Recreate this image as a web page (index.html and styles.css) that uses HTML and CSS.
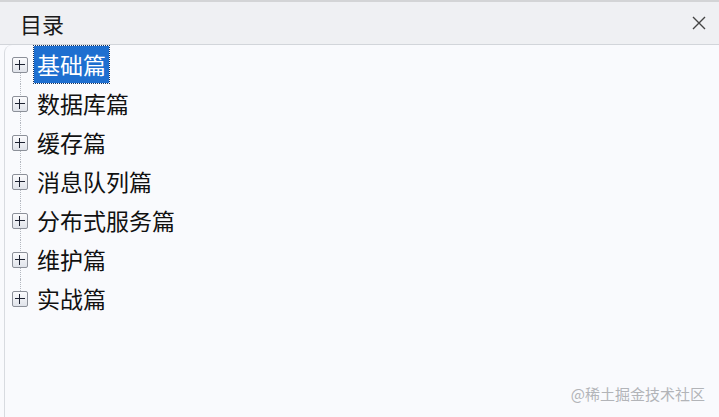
FILE: index.html
```html
<!DOCTYPE html>
<html lang="zh-CN">
<head>
    <meta charset="UTF-8">
    <meta name="viewport" content="width=device-width, initial-scale=1.0">
    <title>目录</title>
    <link rel="stylesheet" href="styles.css">
</head>
<body>
    <div class="panel">
        <div class="panel-header">
            <span class="panel-title">目录</span>
            <span class="close-btn">
                <svg width="14" height="14" viewBox="0 0 14 14">
                    <path d="M1 1 L13 13 M13 1 L1 13" stroke="#444" stroke-width="1.4" fill="none"/>
                </svg>
            </span>
        </div>
        <div class="panel-body">
            <ul class="tree">
                <li class="node"><span class="toggle"></span><span class="label selected">基础篇</span></li>
                <li class="node"><span class="toggle"></span><span class="label">数据库篇</span></li>
                <li class="node"><span class="toggle"></span><span class="label">缓存篇</span></li>
                <li class="node"><span class="toggle"></span><span class="label">消息队列篇</span></li>
                <li class="node"><span class="toggle"></span><span class="label">分布式服务篇</span></li>
                <li class="node"><span class="toggle"></span><span class="label">维护篇</span></li>
                <li class="node"><span class="toggle"></span><span class="label">实战篇</span></li>
            </ul>
        </div>
        <div class="watermark">@稀土掘金技术社区</div>
    </div>
</body>
</html>
```
FILE: styles.css
```css
body {
    margin: 0;
    font-family: "Noto Sans CJK SC", "Liberation Sans", sans-serif;
    background-color: #f9fafd;
}
.panel {
    position: relative;
    height: 417px;
    display: flex;
    flex-direction: column;
}
.panel-header {
    height: 42px;
    border-top: 2px solid #d3d4d6;
    border-bottom: 1px solid #d2d5da;
    background-color: #eff0f3;
    display: flex;
    align-items: center;
    justify-content: space-between;
    padding: 0 13px 0 20px;
}
.panel-title {
    font-size: 22px;
    color: #1a1a1a;
}
.close-btn {
    display: flex;
}
.panel-body {
    flex: 1;
    margin-left: 4px;
    border-left: 1px solid #d8dbe0;
    border-top-left-radius: 8px;
}
.tree {
    list-style: none;
    margin: 0;
    padding: 0;
}
.node {
    position: relative;
    height: 39px;
    display: flex;
    align-items: center;
}
.node::before {
    content: "";
    position: absolute;
    left: 15px;
    top: 0;
    bottom: 0;
    border-left: 1px dotted #b4b8c0;
}
.node:first-child::before {
    top: 50%;
}
.node:last-child::before {
    bottom: 50%;
}
.toggle {
    position: relative;
    box-sizing: border-box;
    width: 16px;
    height: 16px;
    margin-left: 7px;
    border: 1px solid #8c9099;
    border-radius: 2px;
    background: linear-gradient(#fbfbfd, #e0e3ea);
    z-index: 1;
}
.toggle::before,
.toggle::after {
    content: "";
    position: absolute;
    background-color: #1c2130;
}
.toggle::before {
    left: 2px;
    right: 2px;
    top: 6px;
    height: 1px;
}
.toggle::after {
    top: 2px;
    bottom: 2px;
    left: 6px;
    width: 1px;
}
.label {
    margin-left: 6px;
    padding: 0 3px;
    font-size: 23px;
    line-height: 37px;
    color: #111;
}
.label.selected {
    background-color: #1e6fd0;
    color: #fff;
    outline: 1px dotted #16325c;
}
.watermark {
    position: absolute;
    right: 14px;
    bottom: 13px;
    font-size: 15px;
    color: #b2b4b8;
}
```
